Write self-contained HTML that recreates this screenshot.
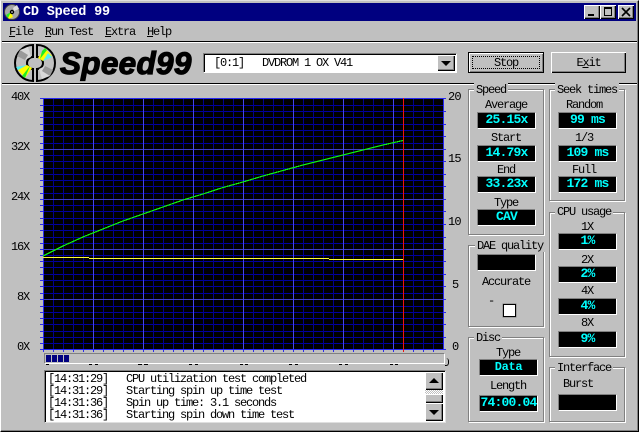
<!DOCTYPE html>
<html><head><meta charset="utf-8"><style>
html,body{margin:0;padding:0;background:#c0c0c0}
#w{position:relative;width:639px;height:432px;overflow:hidden;background:#c0c0c0;font-family:"Liberation Mono",monospace;font-size:12px;line-height:12px;letter-spacing:-1.2px;color:#000}
#w div,#w span.a{position:absolute;box-sizing:border-box}
.t{white-space:pre}
.c{text-align:center}
.g{border:1px solid #808080;box-shadow:inset 1px 1px #fff,1px 1px #fff}
.l{background:#c0c0c0;height:13px;padding:0 2px;white-space:pre;letter-spacing:-1.2px}
.d{background:#000;border-top:1px solid #808080;border-left:1px solid #808080;border-right:1px solid #fff;border-bottom:1px solid #fff;color:#0ff;font-weight:bold;font-size:13px;line-height:14px;letter-spacing:-.8px;text-align:center;white-space:pre}
.b{background:#c0c0c0;box-shadow:inset 1px 1px #fff,inset -1px -1px #000,inset -2px -2px #808080}
u{text-decoration:underline}
</style></head><body><div id="w">
<div style="left:0;top:0;width:639px;height:432px;border-top:1px solid #dfdfdf;border-left:1px solid #fff;border-right:1px solid #000;border-bottom:1px solid #000;box-shadow:inset -1px -1px #808080"></div>
<div style="left:3px;top:3px;width:633px;height:18px;background:#000080"></div>
<div class="t" style="left:23px;top:5px;color:#fff;font-weight:bold;font-size:13.5px;line-height:15px;letter-spacing:-.2px">CD Speed 99</div>
<div class="b" style="left:584px;top:5px;width:16px;height:14px"></div>
<div class="b" style="left:600px;top:5px;width:16px;height:14px"></div>
<div class="b" style="left:618px;top:5px;width:16px;height:14px"></div>
<div class="t" style="left:9px;top:26px"><u>F</u>ile</div>
<div class="t" style="left:45px;top:26px"><u>R</u>un Test</div>
<div class="t" style="left:105px;top:26px"><u>E</u>xtra</div>
<div class="t" style="left:147px;top:26px"><u>H</u>elp</div>
<div style="left:2px;top:41px;width:635px;height:1px;background:#000"></div>
<div style="left:2px;top:42px;width:635px;height:1px;background:#fff"></div>
<div style="left:2px;top:83px;width:635px;height:1px;background:#000"></div>
<div style="left:2px;top:84px;width:635px;height:1px;background:#fff"></div>
<div class="t" style="left:60px;top:44px;font-family:'Liberation Sans',sans-serif;font-weight:bold;font-style:italic;font-size:31.5px;line-height:38px;letter-spacing:.3px;-webkit-text-stroke:1.2px #000">Speed99</div>
<div style="left:203px;top:53px;width:254px;height:20px;background:#fff;border-top:1px solid #808080;border-left:1px solid #808080;border-right:1px solid #fff;border-bottom:1px solid #fff;box-shadow:inset 1px 1px #000"></div>
<div class="t" style="left:214px;top:57px">[0:1]   DVDROM 1 OX V41</div>
<div class="b" style="left:437px;top:55px;width:18px;height:16px"></div>
<div style="left:441px;top:61px;width:0;height:0;border-left:5px solid transparent;border-right:5px solid transparent;border-top:5px solid #000"></div>
<div class="b" style="left:468px;top:52px;width:76px;height:21px;box-shadow:inset 0 0 0 1px #000,inset 2px 2px #fff,inset -2px -2px #808080"></div>
<div style="left:472px;top:56px;width:68px;height:13px;border:1px dotted #000"></div>
<div class="t c" style="left:468px;top:57px;width:76px">Stop</div>
<div class="b" style="left:551px;top:52px;width:75px;height:21px"></div>
<div class="t c" style="left:551px;top:57px;width:75px">E<u>x</u>it</div>

<svg width="639" height="432" style="position:absolute;left:0;top:0;z-index:1;pointer-events:none" shape-rendering="crispEdges">
<rect x="43" y="98" width="400" height="251" fill="#000"/>
<path fill="none" stroke="#0000a0" transform="translate(0,.5)" d="M43 105H443M43 111H443M43 117H443M43 124H443M43 130H443M43 136H443M43 143H443M43 155H443M43 161H443M43 168H443M43 174H443M43 180H443M43 186H443M43 193H443M43 205H443M43 211H443M43 218H443M43 224H443M43 230H443M43 237H443M43 243H443M43 255H443M43 261H443M43 267H443M43 274H443M43 280H443M43 286H443M43 293H443M43 306H443M43 312H443M43 318H443M43 324H443M43 331H443M43 337H443M43 343H443"/>
<path fill="none" stroke="#000090" transform="translate(.5,0)" d="M53 98V349M63 98V349M73 98V349M83 98V349M103 98V349M113 98V349M123 98V349M133 98V349M153 98V349M163 98V349M173 98V349M183 98V349M203 98V349M213 98V349M223 98V349M233 98V349M253 98V349M263 98V349M273 98V349M283 98V349M303 98V349M313 98V349M323 98V349M333 98V349M353 98V349M363 98V349M373 98V349M383 98V349M413 98V349M423 98V349M433 98V349"/>
<path fill="none" stroke="#4040c8" transform="translate(0,.5)" d="M43 149H443M43 199H443M43 249H443M43 299H443"/>
<path fill="none" stroke="#4444ee" transform="translate(.5,0)" d="M93 98V349M143 98V349M193 98V349M243 98V349M293 98V349M343 98V349M393 98V349"/>
<path fill="none" stroke="#2828f0" transform="translate(0,.5)" d="M40 98H446M40 349H446M40 105H43M40 111H43M40 117H43M40 124H43M40 130H43M40 136H43M40 143H43M40 149H43M40 155H43M40 161H43M40 168H43M40 174H43M40 180H43M40 186H43M40 193H43M40 199H43M40 205H43M40 211H43M40 218H43M40 224H43M40 230H43M40 237H43M40 243H43M40 249H43M40 255H43M40 261H43M40 267H43M40 274H43M40 280H43M40 286H43M40 293H43M40 299H43M40 306H43M40 312H43M40 318H43M40 324H43M40 331H43M40 337H43M40 343H43M443 111H446M443 124H446M443 136H446M443 149H446M443 161H446M443 174H446M443 186H446M443 199H446M443 211H446M443 224H446M443 237H446M443 249H446M443 261H446M443 274H446M443 286H446M443 299H446M443 312H446M443 324H446M443 337H446"/>
<path fill="none" stroke="#2828f0" transform="translate(.5,0)" d="M43 98V352M443 98V349M53 349V352M63 349V352M73 349V352M83 349V352M93 349V352M103 349V352M113 349V352M123 349V352M133 349V352M143 349V352M153 349V352M163 349V352M173 349V352M183 349V352M193 349V352M203 349V352M213 349V352M223 349V352M233 349V352M243 349V352M253 349V352M263 349V352M273 349V352M283 349V352M293 349V352M303 349V352M313 349V352M323 349V352M333 349V352M343 349V352M353 349V352M363 349V352M373 349V352M383 349V352M393 349V352M413 349V352M423 349V352M433 349V352"/>
<path fill="none" stroke="#f01010" d="M403.5 98V352"/>
<path fill="none" stroke="#ffff30" d="M43 257.5H89M89 258.5H329M329 259.5H403"/>
<polyline fill="none" stroke="#10f010" stroke-width="1.2" points="43,256 63,246 83,237 103,229 123,221 143,214 163,207 183,200 203,194 223,187.5 243,182 263,176 283,170.5 303,165 323,160 343,155 363,150 383,145 403,140.5"/>

<!-- logo -->
<g shape-rendering="auto">
<path d="M33 45A18 18 0 0 0 33 81V69A6 6 0 0 1 33 57Z" fill="#c0c0c0" stroke="#000" stroke-width="2"/>
<path d="M37 45A18 18 0 0 1 37 81V69A6 6 0 0 0 37 57Z" fill="#c0c0c0" stroke="#000" stroke-width="2"/>
<path d="M38 58L45 48L52 56L43 61Z" fill="#ff0"/><path d="M42 51L45 48L47 50L40 59Z" fill="#2e2"/><path d="M48 53L52 57L43 61Z" fill="#5ee"/>
<path d="M32 68L25 78L18 70L27 65Z" fill="#ff0"/><path d="M25 78L22 76L30 66Z" fill="#2e2"/><path d="M18 70L16 67L27 65Z" fill="#5ee"/>
<path d="M20 50L28 47L31 57L25 60Z" fill="#d8d8d8"/><path d="M20 50L17 56L25 60L28 55Z" fill="#999"/>
<path d="M50 76L42 79L39 69L45 66Z" fill="#d8d8d8"/><path d="M50 76L53 70L45 66L42 71Z" fill="#999"/>
<!-- title icon -->
<circle cx="12" cy="12" r="7.5" fill="#a8a8a8" stroke="#404040"/>
<path d="M7 16L11 12L13 17L9 19Z" fill="#ff0"/><path d="M6 15L11 12L8 18Z" fill="#2e2"/>
<path d="M13 8L17 5L19 9L14 11Z" fill="#e0e0e0"/>
<circle cx="12" cy="12" r="2.2" fill="#000"/><circle cx="12" cy="12" r=".8" fill="#fff"/>
</g>
<!-- title buttons -->
<rect x="588" y="14" width="6" height="2" fill="#000"/>
<path d="M604.5 7.5H611.5V15.5H604.5Z M604 8.5H612" fill="none" stroke="#000"/>
<g shape-rendering="auto"><path d="M622 8L630 16M630 8L622 16" stroke="#000" stroke-width="1.6"/></g>
</svg>

<!-- axis labels -->
<div class="t" style="left:11px;top:91px">40X</div>
<div class="t" style="left:11px;top:141px">32X</div>
<div class="t" style="left:11px;top:191px">24X</div>
<div class="t" style="left:11px;top:241px">16X</div>
<div class="t" style="left:17px;top:291px">8X</div>
<div class="t" style="left:17px;top:341px">0X</div>
<div class="t" style="left:448px;top:91px;letter-spacing:-.8px">20</div>
<div class="t" style="left:448px;top:153px;letter-spacing:-.8px">15</div>
<div class="t" style="left:448px;top:216px;letter-spacing:-.8px">10</div>
<div class="t" style="left:452px;top:279px">5</div>
<div class="t" style="left:452px;top:341px">0</div>

<!-- clipped x labels -->
<div style="left:46px;top:364px;width:3px;height:1px;background:#000"></div>
<div style="left:89px;top:364px;width:3px;height:1px;background:#000"></div><div style="left:95px;top:364px;width:3px;height:1px;background:#000"></div>
<div style="left:138px;top:364px;width:4px;height:1px;background:#000"></div><div style="left:144px;top:364px;width:4px;height:1px;background:#000"></div>
<div style="left:189px;top:364px;width:3px;height:1px;background:#000"></div><div style="left:195px;top:364px;width:3px;height:1px;background:#000"></div>
<div style="left:240px;top:364px;width:3px;height:1px;background:#000"></div><div style="left:245px;top:364px;width:3px;height:1px;background:#000"></div>
<div style="left:289px;top:364px;width:3px;height:1px;background:#000"></div><div style="left:295px;top:364px;width:3px;height:1px;background:#000"></div>
<div style="left:339px;top:364px;width:3px;height:1px;background:#000"></div><div style="left:345px;top:364px;width:3px;height:1px;background:#000"></div>
<div style="left:390px;top:364px;width:3px;height:1px;background:#000"></div><div style="left:395px;top:364px;width:3px;height:1px;background:#000"></div>

<!-- progress -->
<div style="left:44px;top:353px;width:401px;height:11px;background:#c0c0c0;border-top:1px solid #808080;border-left:1px solid #808080;border-right:1px solid #fff;border-bottom:1px solid #fff"></div>
<div style="left:46px;top:355px;width:5px;height:7px;background:#000080"></div>
<div style="left:52px;top:355px;width:5px;height:7px;background:#000080"></div>
<div style="left:58px;top:355px;width:5px;height:7px;background:#000080"></div>
<div style="left:64px;top:355px;width:5px;height:7px;background:#000080"></div>
<div style="left:445px;top:358px;width:4px;height:8px;border:1px solid #000;border-left:none;border-radius:0 3px 3px 0;border-top:none"></div>

<!-- log -->
<div style="left:44px;top:370px;width:402px;height:53px;background:#fff;border-top:1px solid #808080;border-left:1px solid #808080;border-right:1px solid #dfdfdf;border-bottom:1px solid #dfdfdf;box-shadow:inset 1px 1px #000"></div>
<div class="t" style="left:48px;top:373px">[14:31:29]   CPU utilization test completed
[14:31:29]   Starting spin up time test
[14:31:36]   Spin up time: 3.1 seconds
[14:31:36]   Starting spin down time test</div>
<div style="left:425px;top:390px;width:18px;height:5px;background:repeating-conic-gradient(#fff 0 25%,#c0c0c0 0 50%) 0 0/2px 2px"></div>
<div class="b" style="left:425px;top:372px;width:18px;height:18px"></div>
<div style="left:429px;top:378px;width:0;height:0;border-left:5px solid transparent;border-right:5px solid transparent;border-bottom:5px solid #000"></div>
<div class="b" style="left:425px;top:394px;width:18px;height:9px"></div>
<div class="b" style="left:425px;top:403px;width:18px;height:18px"></div>
<div style="left:429px;top:410px;width:0;height:0;border-left:5px solid transparent;border-right:5px solid transparent;border-top:5px solid #000"></div>

<!-- Speed -->
<div class="g" style="left:468px;top:89px;width:76px;height:146px"></div>
<div class="l" style="left:474px;top:83px;padding-top:1px">Speed</div>
<div class="t c" style="left:468px;top:99px;width:76px">Average</div>
<div class="d" style="left:477px;top:112px;width:59px;height:17px">25.15x</div>
<div class="t c" style="left:468px;top:132px;width:76px">Start</div>
<div class="d" style="left:477px;top:145px;width:59px;height:17px">14.79x</div>
<div class="t c" style="left:468px;top:164px;width:76px">End</div>
<div class="d" style="left:477px;top:176px;width:59px;height:17px">33.23x</div>
<div class="t c" style="left:468px;top:197px;width:76px">Type</div>
<div class="d" style="left:477px;top:209px;width:59px;height:17px">CAV</div>

<!-- Seek -->
<div class="g" style="left:549px;top:89px;width:76px;height:112px"></div>
<div class="l" style="left:555px;top:83px;padding-top:1px">Seek times</div>
<div class="t c" style="left:549px;top:99px;width:70px">Random</div>
<div class="d" style="left:558px;top:112px;width:59px;height:17px">99 ms</div>
<div class="t c" style="left:549px;top:132px;width:70px">1/3</div>
<div class="d" style="left:558px;top:145px;width:59px;height:17px">109 ms</div>
<div class="t c" style="left:549px;top:164px;width:70px">Full</div>
<div class="d" style="left:558px;top:176px;width:59px;height:17px">172 ms</div>

<!-- CPU -->
<div class="g" style="left:549px;top:212px;width:76px;height:145px"></div>
<div class="l" style="left:555px;top:205px;padding-top:1px">CPU usage</div>
<div class="t c" style="left:549px;top:221px;width:76px">1X</div>
<div class="d" style="left:558px;top:233px;width:59px;height:17px">1%</div>
<div class="t c" style="left:549px;top:254px;width:76px">2X</div>
<div class="d" style="left:558px;top:266px;width:59px;height:17px">2%</div>
<div class="t c" style="left:549px;top:285px;width:76px">4X</div>
<div class="d" style="left:558px;top:298px;width:59px;height:17px">4%</div>
<div class="t c" style="left:549px;top:317px;width:76px">8X</div>
<div class="d" style="left:558px;top:331px;width:59px;height:17px">9%</div>

<!-- DAE -->
<div class="g" style="left:468px;top:245px;width:76px;height:82px"></div>
<div class="l" style="left:475px;top:239px;padding-top:1px">DAE quality</div>
<div class="d" style="left:477px;top:254px;width:59px;height:17px"></div>
<div class="t c" style="left:468px;top:276px;width:76px">Accurate</div>
<div class="t" style="left:488px;top:295px">-</div>
<div style="left:503px;top:304px;width:13px;height:13px;background:#fff;border:1px solid #000;box-shadow:0 0 0 .5px #808080"></div>

<!-- Disc -->
<div class="g" style="left:468px;top:337px;width:76px;height:85px"></div>
<div class="l" style="left:474px;top:331px;padding-top:1px">Disc</div>
<div class="t c" style="left:470px;top:347px;width:76px">Type</div>
<div class="d" style="left:479px;top:359px;width:59px;height:17px;letter-spacing:-.3px;font-size:12px">Data</div>
<div class="t c" style="left:470px;top:380px;width:76px">Length</div>
<div class="d" style="left:479px;top:395px;width:59px;height:17px">74:00.04</div>

<!-- Interface -->
<div class="g" style="left:549px;top:367px;width:76px;height:55px"></div>
<div class="l" style="left:555px;top:361px;padding-top:1px">Interface</div>
<div class="t" style="left:563px;top:378px">Burst</div>
<div class="d" style="left:558px;top:394px;width:59px;height:17px"></div>
</div></body></html>
